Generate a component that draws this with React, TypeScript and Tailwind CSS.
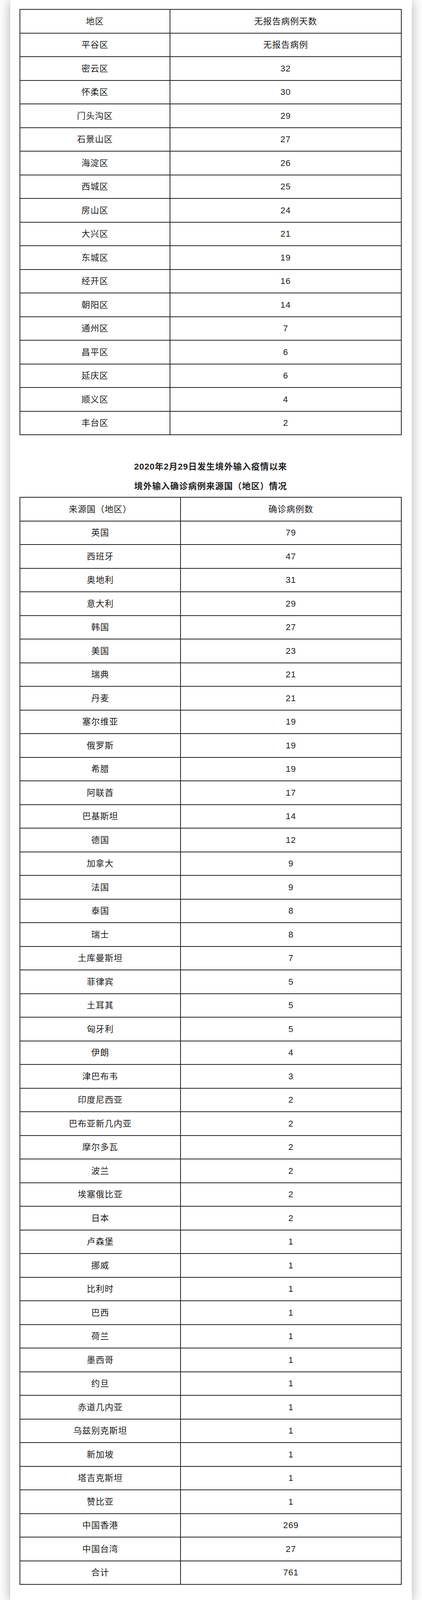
const districts: [string, string][] = [
  ['平谷区', '无报告病例'],
  ['密云区', '32'],
  ['怀柔区', '30'],
  ['门头沟区', '29'],
  ['石景山区', '27'],
  ['海淀区', '26'],
  ['西城区', '25'],
  ['房山区', '24'],
  ['大兴区', '21'],
  ['东城区', '19'],
  ['经开区', '16'],
  ['朝阳区', '14'],
  ['通州区', '7'],
  ['昌平区', '6'],
  ['延庆区', '6'],
  ['顺义区', '4'],
  ['丰台区', '2'],
]

const sources: [string, string][] = [
  ['英国', '79'],
  ['西班牙', '47'],
  ['奥地利', '31'],
  ['意大利', '29'],
  ['韩国', '27'],
  ['美国', '23'],
  ['瑞典', '21'],
  ['丹麦', '21'],
  ['塞尔维亚', '19'],
  ['俄罗斯', '19'],
  ['希腊', '19'],
  ['阿联酋', '17'],
  ['巴基斯坦', '14'],
  ['德国', '12'],
  ['加拿大', '9'],
  ['法国', '9'],
  ['泰国', '8'],
  ['瑞士', '8'],
  ['土库曼斯坦', '7'],
  ['菲律宾', '5'],
  ['土耳其', '5'],
  ['匈牙利', '5'],
  ['伊朗', '4'],
  ['津巴布韦', '3'],
  ['印度尼西亚', '2'],
  ['巴布亚新几内亚', '2'],
  ['摩尔多瓦', '2'],
  ['波兰', '2'],
  ['埃塞俄比亚', '2'],
  ['日本', '2'],
  ['卢森堡', '1'],
  ['挪威', '1'],
  ['比利时', '1'],
  ['巴西', '1'],
  ['荷兰', '1'],
  ['墨西哥', '1'],
  ['约旦', '1'],
  ['赤道几内亚', '1'],
  ['乌兹别克斯坦', '1'],
  ['新加坡', '1'],
  ['塔吉克斯坦', '1'],
  ['赞比亚', '1'],
  ['中国香港', '269'],
  ['中国台湾', '27'],
  ['合计', '761'],
]

function DataTable({
  head,
  rows,
  firstCol,
}: {
  head: [string, string]
  rows: [string, string][]
  firstCol: string
}) {
  const all = [head, ...rows]
  return (
    <table className="w-full table-fixed border-collapse border-2 border-[#222] text-center">
      <colgroup>
        <col className={firstCol} />
        <col />
      </colgroup>
      <tbody>
        {all.map(([a, b], i) => (
          <tr key={i} className="h-[60.5px]">
            <td className="border-y-2 border-r-2 border-[#222] p-0">{a}</td>
            <td className="border-y-2 border-[#222] p-0">{b}</td>
          </tr>
        ))}
      </tbody>
    </table>
  )
}

export default function App() {
  return (
    <div className="overflow-hidden bg-white font-['Liberation_Sans','Noto_Sans_CJK_SC',sans-serif] text-[22px] tracking-[1px] text-[#1c1c1c]">
      <div className="mx-[26px] bg-white pt-px pl-[24px] pr-[26px] pb-[44px] shadow-[0_0_30px_rgba(0,0,0,0.32)]">
        <p className="-mt-[39px] text-center font-bold leading-[50px] text-[#333]">
          表1 北京市各区连续无新增本地确诊病例天数情况
        </p>
        <div className="mt-[11px]">
          <DataTable head={['地区', '无报告病例天数']} rows={districts} firstCol="w-[384px]" />
        </div>
        <div className="mt-[56px] text-center font-bold leading-[50px] text-[#222]">
          <p>2020年2月29日发生境外输入疫情以来</p>
          <p>境外输入确诊病例来源国（地区）情况</p>
        </div>
        <div className="mt-[2px]">
          <DataTable head={['来源国（地区）', '确诊病例数']} rows={sources} firstCol="w-[411px]" />
        </div>
      </div>
    </div>
  )
}
